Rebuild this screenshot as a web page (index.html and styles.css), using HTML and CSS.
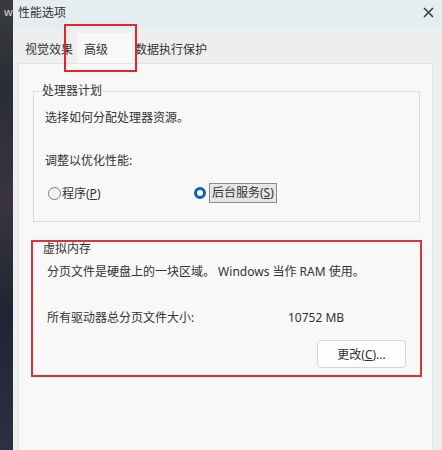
FILE: index.html
```html
<!DOCTYPE html>
<html lang="zh-CN">
<head>
<meta charset="utf-8">
<title>性能选项</title>
<link rel="stylesheet" href="styles.css">
</head>
<body>
<div class="desk"><span class="desk-text">w</span></div>
<div class="window">
  <div class="titlebar">
    <span class="title">性能选项</span>
    <svg class="close" width="11" height="11" viewBox="0 0 11 11"><path d="M1 1L10 10M10 1L1 10" stroke="#3a3a3a" stroke-width="1.5" fill="none"/></svg>
  </div>
  <div class="tabs">
    <div class="tab">视觉效果</div>
    <div class="tab active">高级</div>
    <div class="tab">数据执行保护</div>
    <div class="tab-mark"></div>
  </div>
  <div class="panel">
    <fieldset class="group">
      <legend>处理器计划</legend>
      <p class="line first">选择如何分配处理器资源。</p>
      <p class="line second">调整以优化性能:</p>
      <div class="radios">
        <label class="radio r1"><span class="dot"></span><span>程序(<u>P</u>)</span></label>
        <label class="radio r2"><span class="dot on"></span><span class="focus">后台服务(<u>S</u>)</span></label>
      </div>
    </fieldset>
    <div class="vm">
      <div class="vm-title">虚拟内存</div>
      <p class="line vm-desc">分页文件是硬盘上的一块区域。 Windows 当作 RAM 使用。</p>
      <div class="size-row"><span class="size-label">所有驱动器总分页文件大小:</span><span>10752 MB</span></div>
      <div class="btn-row"><button class="btn">更改(<u>C</u>)...</button></div>
    </div>
  </div>
</div>
</body>
</html>
```
FILE: styles.css
```css
* { box-sizing: border-box; }
html, body { margin: 0; height: 450px; overflow: hidden; }
body {
  display: flex;
  font-family: "Noto Sans", "Noto Sans CJK SC", sans-serif;
  font-size: 12px;
  color: #333;
  background: #eee;
}
.desk {
  width: 13px;
  flex: none;
  background: linear-gradient(180deg, #3b3b3d 0%, #2a2d38 20%, #3a3540 45%, #1e2433 70%, #2b3142 100%);
  overflow: hidden;
}
.desk-text { display: block; color: #ddd; font-size: 11px; line-height: 14px; margin: 5px 0 0 4px; }
.window {
  flex: 1;
  display: flex;
  flex-direction: column;
  background: #eeeeee;
}
.titlebar {
  height: 29px;
  flex: none;
  background: #e4eef1;
  display: flex;
  align-items: center;
  justify-content: space-between;
  padding: 0 8px 0 5px;
}
.title { line-height: 16px; margin-top: -4px; }
.close { margin-top: -5px; }
.tabs {
  position: relative;
  height: 34px;
  flex: none;
  display: flex;
  align-items: flex-end;
  padding-left: 9px;
}
.tab {
  height: 30px;
  padding: 9px 3px 5px;
  line-height: 16px;
}
.tab.active {
  width: 55px;
  padding-left: 7px;
  background: #f8f8f8;
  margin-left: 1px;
}
.tab-mark {
  position: absolute;
  left: 51px;
  top: -5px;
  width: 73px;
  height: 48px;
  border: 2px solid #e3262b;
}
.panel {
  flex: 1;
  margin: 0 9px 0 5px;
  background: #f8f8f8;
  border: 1px solid #e3e3e3;
  border-bottom: none;
  display: flex;
  flex-direction: column;
}
.group {
  margin: 20px 12px 0 14px;
  padding: 0 0 20px 11px;
  border: 1px solid #dcdcdc;
  min-width: 0;
}
.group legend {
  padding: 0 1px;
  margin-left: -4px;
  line-height: 14px;
}
.line { margin: 0; line-height: 16px; }
.line.first { margin-top: 12px; }
.line.second { margin-top: 27px; }
.radios { display: flex; margin-top: 16px; height: 16px; align-items: center; }
.radio { display: flex; align-items: center; }
.r1 { width: 146px; margin-left: 3px; }
.dot {
  width: 13px;
  height: 13px;
  border-radius: 50%;
  border: 1px solid #7a7a7a;
  background: #f3f3f3;
  margin-right: 1px;
  flex: none;
}
.dot.on {
  width: 12px;
  height: 12px;
  border: 3.5px solid #0b62b8;
  background: #fff;
  margin-right: 3px;
}
.focus {
  border: 1px solid #8a8a8a;
  background: #e6e6e6;
  padding: 1px 2px;
  line-height: 16px;
}
.vm {
  margin: 18px 10px 0 12px;
  border: 2px solid #d8343a;
  padding: 0 14px 7px 14px;
}
.vm-title { line-height: 14px; margin-left: -4px; }
.vm-desc { margin-top: 8px; }
.size-row { display: flex; margin-top: 30px; line-height: 16px; }
.size-label { width: 241px; }
.btn-row { display: flex; justify-content: flex-end; margin-top: 14px; }
.btn {
  width: 89px;
  height: 28px;
  font: inherit;
  color: #333;
  background: #fdfdfd;
  border: 1px solid #d6d6d6;
  border-radius: 4px;
  padding: 0;
}
```
